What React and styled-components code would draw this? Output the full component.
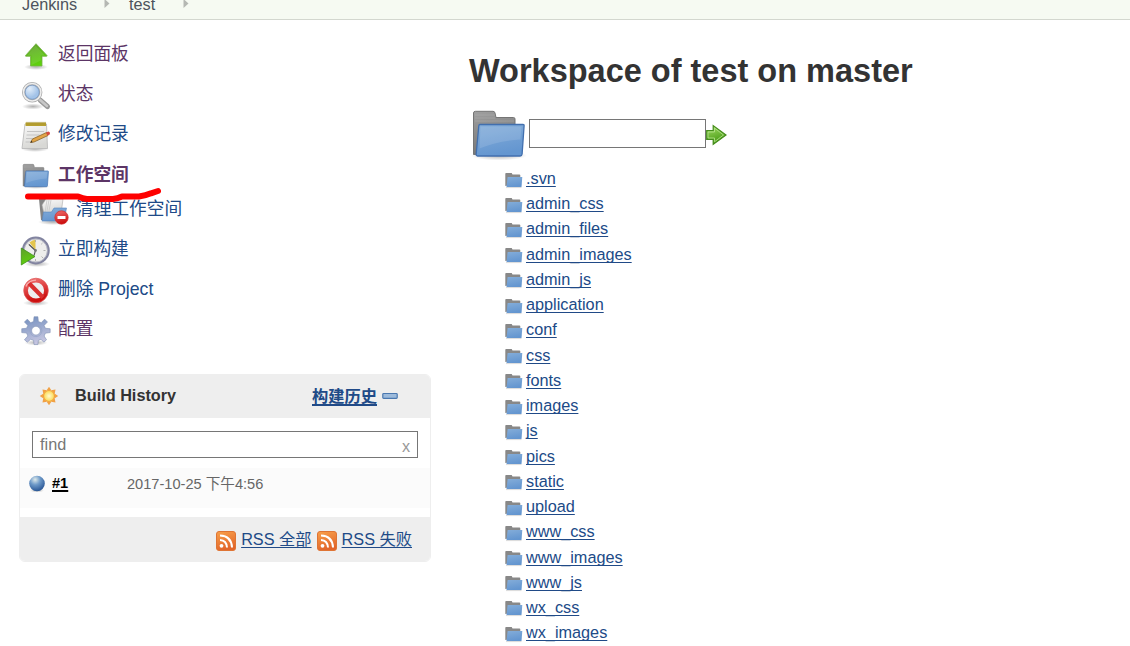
import React from 'react';
import styled, { createGlobalStyle } from 'styled-components';

const GlobalStyle = createGlobalStyle`
  * { box-sizing: border-box; }
  body {
    margin: 0;
    background: #fff;
    color: #333;
    font-family: "Liberation Sans", "Noto Sans CJK SC", sans-serif;
    font-size: 16.25px;
    overflow: hidden;
  }
`;

const Page = styled.div`
  height: 646px;
  overflow: hidden;
`;
const Breadcrumbs = styled.nav`
  display: flex;
  align-items: center;
  height: 20px;
  padding: 0 0 12px 22px;
  background: #f6faf2;
  border-bottom: 1px solid #d3d7cf;
  color: #4d545d;
  line-height: 20px;
`;
const Crumb = styled.span`
  width: ${(p) => p.$width}px;
`;
const Separator = styled.svg`
  display: block;
  width: 6px;
  height: 10px;
  margin-right: ${(p) => p.$gap || 0}px;
`;
const Columns = styled.div`
  display: grid;
  grid-template-columns: 431px 1fr;
  column-gap: 38px;
`;
const Sidebar = styled.aside`
  padding: 14px 0 0 19px;
`;
const TaskList = styled.nav`
  height: 339.5px;
`;
const Task = styled.a`
  position: relative;
  display: flex;
  align-items: center;
  height: ${(p) => p.$height || 40}px;
  padding-left: ${(p) => (p.$nested ? 19 : 1)}px;
  color: ${(p) => (p.$visited ? '#5c3566' : '#204a87')};
  font-size: 17.7px;
  font-weight: ${(p) => (p.$current ? 700 : 400)};
  white-space: nowrap;
`;
const TaskLabel = styled.span`
  padding-bottom: 4px;
`;
const TaskIcon = styled.svg`
  display: block;
  flex: none;
  width: 32px;
  height: 32px;
  margin: 3px 6px 0 0;
  overflow: visible;
`;
const SunIcon = styled.svg`
  flex: none;
  width: 22px;
  height: 22px;
`;
const RedMark = styled.svg`
  position: absolute;
  z-index: 2;
  left: 5px;
  top: 32px;
  width: 140px;
  height: 18px;
`;

const History = styled.section`
  width: 412px;
  height: 188.5px;
  border: 1px solid #eee;
  border-radius: 6px;
  overflow: hidden;
`;
const HistoryHeader = styled.header`
  display: flex;
  align-items: center;
  height: 43.5px;
  padding: 0 32px 1px 18px;
  background: #eee;
`;
const HistoryTitle = styled.strong`
  flex: 1;
  padding-left: 15px;
`;
const Link = styled.a`
  color: ${(p) => p.$color || '#204a87'};
  font-weight: ${(p) => (p.$bold ? 700 : 400)};
  text-decoration: underline;
  text-decoration-thickness: ${(p) => (p.$bold ? 2 : 1)}px;
  text-decoration-skip-ink: none;
  text-underline-offset: 2px;
  white-space: nowrap;
`;
const TrendLink = styled(Link)`
  padding-bottom: 2px;
`;
const Collapse = styled.svg`
  width: 16px;
  height: 8px;
  margin: 1px 0 0 5px;
`;
const FindBox = styled.div`
  display: flex;
  align-items: center;
  justify-content: space-between;
  height: 27px;
  margin: 13px 12px 10px;
  padding: 0 7px 0 7px;
  border: 1px solid #767676;
  color: #777;
`;
const Clear = styled.span`
  padding-top: 3px;
  color: #999;
`;
const Build = styled.div`
  display: flex;
  align-items: center;
  height: 40px;
  padding: 0 0 9px 8px;
  background: #fbfbfb;
`;
const Ball = styled.svg`
  width: 18px;
  height: 18px;
  margin-right: 6px;
`;
const BuildNumber = styled.span`
  width: 75px;
  padding-bottom: 1px;
  font-size: 14.6px;
`;
const BuildTime = styled.span`
  padding-bottom: 3px;
  color: #666;
  font-size: 14.6px;
`;
const HistoryFooter = styled.footer`
  display: flex;
  align-items: center;
  justify-content: flex-end;
  height: 45px;
  margin-top: 9px;
  padding: 0 18px 3px 0;
  background: #eee;
`;
const RssIcon = styled.svg`
  width: 20px;
  height: 20px;
  margin: 5px 5px 0 5px;
`;

const Main = styled.main`
  min-width: 0;
`;
const Title = styled.h1`
  margin: 32px 0 0;
  font-size: 32.5px;
  line-height: 39px;
  white-space: nowrap;
`;
const PathBar = styled.form`
  display: flex;
  align-items: center;
  height: 60px;
  margin-top: 12px;
`;
const BigFolder = styled.svg`
  width: 60px;
  height: 60px;
`;
const PathInput = styled.input`
  width: 177px;
  height: 29px;
  margin: 0;
  padding: 0 4px;
  border: 1px solid #767676;
  border-radius: 0;
  outline: none;
  background: #fff;
`;
const GoIcon = styled.svg`
  width: 21px;
  height: 22px;
  margin-top: 3px;
`;
const FileList = styled.ul`
  margin: 2.4px 0 0;
  padding: 0 0 0 34px;
  list-style: none;
`;
const FileRow = styled.li`
  display: flex;
  align-items: center;
  height: 25.24px;
  line-height: 18px;
`;
const SmallFolder = styled.svg`
  width: 20px;
  height: 20px;
  margin: 3px 3px 0 0;
`;

const Grad = ({ id, from, to }) => (
  <linearGradient id={id} x1="0" y1="0" x2="0.3" y2="1">
    <stop offset="0" stopColor={from} />
    <stop offset="1" stopColor={to} />
  </linearGradient>
);

const DefsHost = styled.svg`
  display: block;
  width: 0;
  height: 0;
`;
const Defs = () => (
  <DefsHost>
    <defs>
      <Grad id="blue" from="#84add9" to="#6496d0" />
      <Grad id="grey" from="#a0a0a0" to="#757575" />
      <Grad id="green" from="#5f9e2b" to="#5ed00c" />
      <Grad id="go" from="#a5de68" to="#43980f" />
      <Grad id="paper" from="#fafafa" to="#d8d8d5" />
      <Grad id="red" from="#f07070" to="#cc1010" />
      <Grad id="gear" from="#6f8dbd" to="#c5c5e0" />
      <Grad id="rss" from="#f8a04a" to="#e2662a" />
      <radialGradient id="shadow">
        <stop offset="0" stopColor="#000" stopOpacity=".3" />
        <stop offset="1" stopColor="#000" stopOpacity="0" />
      </radialGradient>
      <radialGradient id="lens" cx=".35" cy=".3">
        <stop offset="0" stopColor="#e3eefa" />
        <stop offset="1" stopColor="#a3c3e8" />
      </radialGradient>
      <radialGradient id="ball" cx=".38" cy=".25" r=".75">
        <stop offset="0" stopColor="#dde9ea" />
        <stop offset=".45" stopColor="#6d99c8" />
        <stop offset="1" stopColor="#2a5796" />
      </radialGradient>
      <radialGradient id="sun">
        <stop offset="0" stopColor="#fffbd0" />
        <stop offset="1" stopColor="#fbd84e" />
      </radialGradient>
    </defs>
  </DefsHost>
);

const FolderShape = () => (
  <g>
    <ellipse cx="30" cy="52.500" rx="28" ry="5" fill="url(#shadow)" />
    <path d="M4.500 51.500V10q0-1.700 2-1.700h17.500q1.700 0 2 1.700l1 4.500h17.500q1.500 0 1.500 1.500v34z" fill="url(#grey)" stroke="#757575" strokeWidth="1" />
    <path d="M6 12h20M6 15h20M6 18h39" stroke="#bbb" strokeWidth=".7" opacity=".5" />
    <path d="M11 21.500h43q1.200 0 1.100 1.200l-2 28.300q-.2 2-2 2H8.500q-1.500 0-1.300-2l2.600-28.300q.1-1.200 1.200-1.200z" fill="url(#blue)" stroke="#416fae" strokeWidth="1.300" />
    <path d="M11.500 23.500h41l-1 13q-21 1-41 9z" fill="#fff" opacity=".12" />
  </g>
);

const TinyFolder = () => (
  <SmallFolder viewBox="0 0 20 20">
    <path d="M2.300 16V3.800q0-.8.800-.8h5.600l.8 1.500h7q.8 0 .8.800v8z" fill="#888" />
    <path d="M4.600 7h14.700l-.8 10H3.500z" fill="url(#blue)" />
    <path d="M3 17.600h15.500" stroke="#000" strokeOpacity=".15" />
  </SmallFolder>
);

const icons = {
  up: (
    <g>
      <ellipse cx="16" cy="27" rx="12" ry="3" fill="url(#shadow)" />
      <path d="M16 3.700 27 15.500q.4.800-.6.800H22v9.700H10.500v-9.700H6q-1-.1-.4-.9z" fill="url(#green)" stroke="#77b34a" strokeWidth=".8" />
      <path d="M15.500 5.500 25 15.500h-4.200v5L11.500 25v-9.500H7z" fill="#fff" opacity=".1" />
    </g>
  ),
  search: (
    <g>
      <ellipse cx="13" cy="26.500" rx="11" ry="3" fill="url(#shadow)" />
      <path d="m20 20 7.500 6.500" stroke="#999" strokeWidth="5" strokeLinecap="round" />
      <path d="m19 19 8 7" stroke="#c8c8c8" strokeWidth="2.500" strokeLinecap="round" />
      <circle cx="12.200" cy="12.200" r="8.600" fill="url(#lens)" stroke="#aaa" strokeWidth="3.200" />
      <circle cx="12.200" cy="12.200" r="8.700" fill="none" stroke="#eee" strokeWidth="1.500" />
      <circle cx="12.200" cy="12.200" r="7" fill="none" stroke="#7195c4" strokeWidth=".7" />
    </g>
  ),
  notepad: (
    <g>
      <ellipse cx="15" cy="29" rx="14" ry="3" fill="url(#shadow)" />
      <path d="M5 4h21.500l1 24.500H2z" fill="url(#paper)" stroke="#bbb" strokeWidth=".9" />
      <path d="M5.500 2.500h20.500v3.500h-20.500z" fill="#c6ae35" />
      <path d="M7 1.800v4m2-4v4m2-4v4m2-4v4m2-4v4m2-4v4m2-4v4m2-4v4m2-4v4m2-4v4" stroke="#837421" strokeWidth=".6" />
      <path d="M7 11.500h17M6.500 15h13M6 18.500h8M5.500 22h5" stroke="#c4c4c4" />
      <path d="m10.500 22.500 2-3.500 14-6.500 1.500 3-14 6.500z" fill="#e2a447" stroke="#8a6528" strokeWidth=".8" />
      <path d="m26 12.600 2.500-1.100q2 .5 1.200 3l-2.400 1.100z" fill="#d54b40" />
      <path d="m10.500 22.500 1-1.700 1 1.500z" fill="#222" />
    </g>
  ),
  folder: (
    <g transform="translate(.9 .2) scale(.5)">
      <FolderShape />
    </g>
  ),
  clean: (
    <g>
      <ellipse cx="15" cy="27" rx="15" ry="3" fill="url(#shadow)" />
      <path d="M1 4h8l1 2v19H3z" fill="#858585" />
      <path d="m4 10 4-6h17l-2 15H6z" fill="url(#paper)" stroke="#aaa" strokeWidth=".6" />
      <path d="m9 5-3 19m5-19-2 11m4-11-2 11" stroke="#cfcfcf" strokeWidth="1" />
      <path d="M5.500 17h8l2.500-4h12.500L26 26H4z" fill="url(#blue)" stroke="#5683bc" strokeWidth=".6" />
      <circle cx="23.500" cy="22.500" r="6.700" fill="url(#red)" stroke="#d32d2d" strokeWidth=".7" />
      <path d="M19.500 21h8v3h-8z" fill="#fff" />
    </g>
  ),
  clock: (
    <g>
      <ellipse cx="17" cy="29" rx="13" ry="3" fill="url(#shadow)" />
      <circle cx="15.800" cy="15.500" r="12.600" fill="#eeeeec" stroke="#8284a0" strokeWidth="2.700" />
      <circle cx="15.800" cy="15.500" r="11.600" fill="none" stroke="#c5c6ce" strokeWidth=".8" />
      <path d="M15.500 15.500 9.500 7.500q3-2.700 6-2.800z" fill="#e4c64d" />
      <path d="M8 8.500 15.500 16m0-11v2m10 8.500h-2M15.500 26v-2m7-16-1.300 1.300M23 23l-1.500-1.500" stroke="#aaa" strokeWidth=".9" />
      <path d="M9 9.500 15.500 15.500l-1.500 5" fill="none" stroke="#555" strokeWidth="1.100" />
      <circle cx="15.500" cy="15.500" r="1.400" fill="#777" />
      <path d="m1.300 13 13.700 8.500L1.300 30z" fill="url(#green)" stroke="#3c9014" strokeWidth=".8" />
    </g>
  ),
  prohibit: (
    <g>
      <ellipse cx="16" cy="28" rx="13" ry="3" fill="url(#shadow)" />
      <circle cx="16" cy="15.500" r="10.200" fill="#eeeeef" stroke="url(#red)" strokeWidth="4.200" />
      <path d="m9 8.200 14 14.300" stroke="#d92f2f" strokeWidth="4.200" />
      <circle cx="16" cy="15.500" r="12.300" fill="none" stroke="#d55" strokeWidth=".7" />
      <path d="M6 11.500q2-6 10-6.400" stroke="#f7aaaa" strokeWidth="1.300" fill="none" />
    </g>
  ),
  gear: (
    <g transform="translate(.6 .3) scale(.96)">
      <ellipse cx="16" cy="28.500" rx="12" ry="3" fill="url(#shadow)" />
      <g fill="url(#gear)" stroke="#7b8cb1" strokeWidth=".6">
        <path
          fillRule="evenodd"
          d="M13.500 6.500 14 1.500h4l.5 5 3 1.200L25 4l3 3-3.500 3.500 1.300 3 5 .5v4l-5 .6-1.300 3L27 25.500 24.200 28l-3-3.100-2.700 1.200-.5 4.400h-4l-.5-4.400-3-1.200L7 28l-3-2.500 3.500-4-1.300-3-5-.5v-4l5-.5 1.300-3L4 7l3-3 3.500 3.700zM16 11.500a4.500 4.500 0 1 0 .01 0z"
        />
        <circle cx="16" cy="16" r="6.200" fill="none" stroke="#91a0c4" />
      </g>
    </g>
  ),
};

const tasks = [
  { icon: 'up', label: '返回面板', visited: true },
  { icon: 'search', label: '状态', visited: true },
  { icon: 'notepad', label: '修改记录' },
  { icon: 'folder', label: '工作空间', visited: true, current: true, height: 41 },
  { icon: 'clean', label: '清理工作空间', nested: true, height: 28 },
  { icon: 'clock', label: '立即构建', height: 52 },
  { icon: 'prohibit', label: '删除 Project', height: 28 },
  { icon: 'gear', label: '配置', visited: true, height: 52 },
];

const files = [
  '.svn', 'admin_css', 'admin_files', 'admin_images', 'admin_js', 'application',
  'conf', 'css', 'fonts', 'images', 'js', 'pics', 'static', 'upload',
  'www_css', 'www_images', 'www_js', 'wx_css', 'wx_images',
];

const CrumbArrow = ({ gap }) => (
  <Separator $gap={gap} viewBox="0 0 6 10">
    <path d="M.5 0 5.500 4.500.5 9z" fill="#b5b8b3" />
  </Separator>
);

const Rss = () => (
  <RssIcon viewBox="0 0 20 20">
    <rect x=".5" y=".5" width="19" height="19" rx="2.500" fill="url(#rss)" stroke="#df7434" />
    <circle cx="5.500" cy="14.800" r="1.900" fill="#fff" />
    <path d="M4 9q6.500.3 7 7.500M4 4.500q11.500.5 12 12" fill="none" stroke="#fff" strokeWidth="2" />
  </RssIcon>
);

const Sun = () => (
  <SunIcon viewBox="-11 -11 22 22">
    {[0, 45, 90, 135, 180, 225, 270, 315].map((a) => (
      <path key={a} d="M-2.500-5.500 0-9.200l2.500 3.700z" transform={`rotate(${a})`} fill="#f1a145" />
    ))}
    <circle r="5.500" fill="url(#sun)" stroke="#f2a33c" strokeWidth="1.200" />
  </SunIcon>
);

export default function App() {
  return (
    <Page>
      <GlobalStyle />
      <Defs />
      <Breadcrumbs>
        <Crumb $width={82}>Jenkins</Crumb>
        <CrumbArrow gap={19} />
        <Crumb $width={54}>test</Crumb>
        <CrumbArrow />
      </Breadcrumbs>
      <Columns>
        <Sidebar>
          <TaskList>
            {tasks.map((t) => (
              <Task key={t.label} $visited={t.visited} $current={t.current} $nested={t.nested} $height={t.height}>
                <TaskIcon viewBox="0 0 32 32">{icons[t.icon]}</TaskIcon>
                <TaskLabel>{t.label}</TaskLabel>
                {t.current && (
                  <RedMark viewBox="0 0 140 18">
                    <path
                      d="M4 10.500H54q5 2.300 9 2.500h26q5-.5 9-2.500h17q7-1 12-3.200L134 5"
                      fill="none"
                      stroke="#fe0000"
                      strokeWidth="6"
                      strokeLinecap="round"
                      strokeLinejoin="round"
                    />
                  </RedMark>
                )}
              </Task>
            ))}
          </TaskList>
          <History>
            <HistoryHeader>
              <Sun />
              <HistoryTitle>Build History</HistoryTitle>
              <TrendLink $bold>构建历史</TrendLink>
              <Collapse viewBox="0 0 16 8">
                <rect x=".8" y="1.500" width="14.400" height="4.800" rx=".8" fill="#9dbbdc" stroke="#4a78b0" strokeWidth="1.200" />
              </Collapse>
            </HistoryHeader>
            <FindBox>
              <span>find</span>
              <Clear>x</Clear>
            </FindBox>
            <Build>
              <Ball viewBox="0 0 18 18">
                <ellipse cx="9" cy="15.500" rx="7" ry="2" fill="url(#shadow)" />
                <circle cx="9" cy="8.500" r="7.800" fill="url(#ball)" />
              </Ball>
              <BuildNumber>
                <Link $bold $color="#000">#1</Link>
              </BuildNumber>
              <BuildTime>2017-10-25 下午4:56</BuildTime>
            </Build>
            <HistoryFooter>
              <Rss />
              <Link>RSS 全部</Link>
              <Rss />
              <Link>RSS 失败</Link>
            </HistoryFooter>
          </History>
        </Sidebar>
        <Main>
          <Title>Workspace of test on master</Title>
          <PathBar>
            <BigFolder viewBox="0 0 60 60">
              <FolderShape />
            </BigFolder>
            <PathInput />
            <GoIcon viewBox="0 0 21 22">
              <path d="M.7 6.500h6.500V1.600L20 11 7.200 20.400v-5H.7z" fill="url(#go)" stroke="#458c1c" strokeWidth="1.200" />
              <path d="M2 8h6.500V4l9 7-9 6.800V14H2z" fill="none" stroke="#b6e38f" strokeWidth=".8" />
            </GoIcon>
          </PathBar>
          <FileList>
            {files.map((name) => (
              <FileRow key={name}>
                <TinyFolder />
                <Link>{name}</Link>
              </FileRow>
            ))}
          </FileList>
        </Main>
      </Columns>
    </Page>
  );
}
